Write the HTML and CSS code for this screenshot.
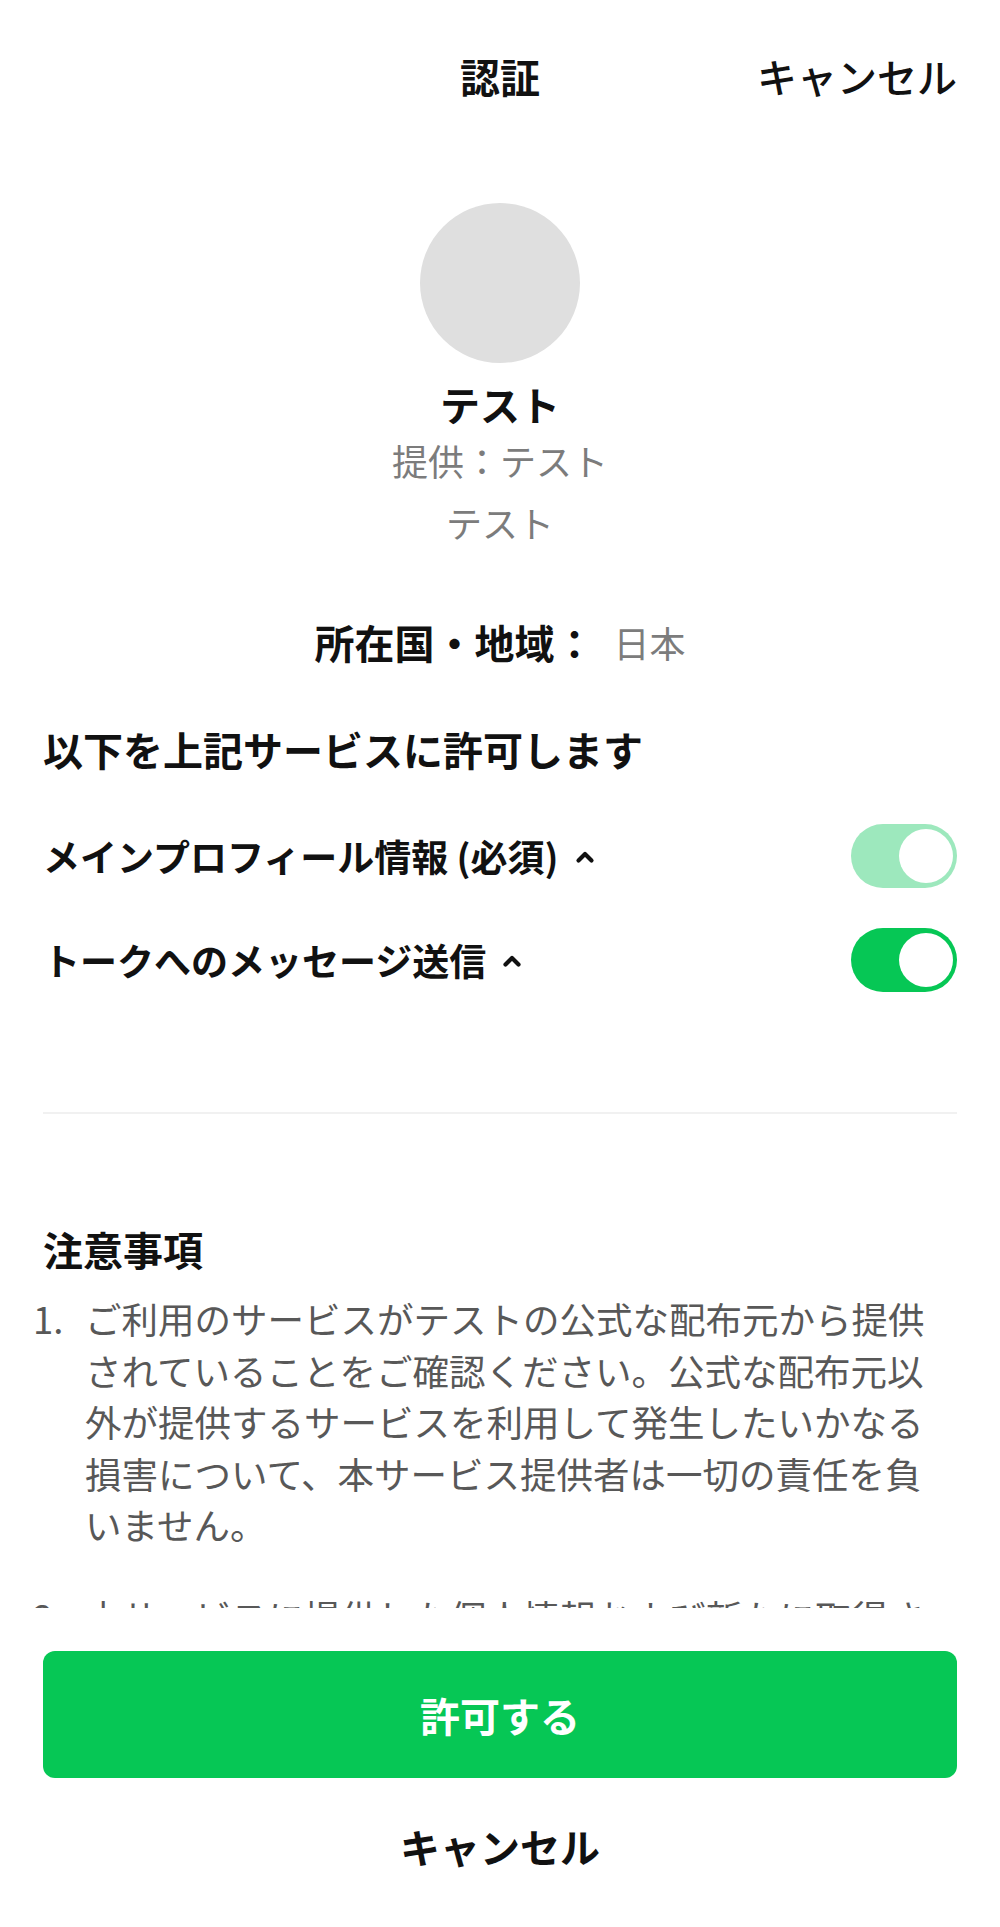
FILE: index.html
```html
<!DOCTYPE html>
<html lang="ja">
<head>
<meta charset="utf-8">
<title>認証</title>
<link rel="stylesheet" href="styles.css">
</head>
<body>
<div class="page">
  <header class="topbar">
    <span></span>
    <h1 class="title">認証</h1>
    <span class="top-cancel">キャンセル</span>
  </header>

  <main class="content">
    <div class="avatar"></div>
    <div class="app-name">テスト</div>
    <div class="meta">提供：テスト</div>
    <div class="meta">テスト</div>

    <div class="region">
      <span class="region-label">所在国・地域：</span>
      <span class="region-value">日本</span>
    </div>

    <h2 class="allow-title">以下を上記サービスに許可します</h2>

    <div class="perm perm-first">
      <div class="perm-label">
        <span>メインプロフィール情報 (必須)</span>
        <svg class="chev" viewBox="0 0 20 14" width="20" height="14"><polyline points="3.5,10.5 10,4 16.5,10.5" fill="none" stroke="#111" stroke-width="4.2" stroke-linejoin="round" stroke-linecap="round"/></svg>
      </div>
      <div class="toggle toggle-disabled"><span class="knob"></span></div>
    </div>

    <div class="perm perm-next">
      <div class="perm-label">
        <span>トークへのメッセージ送信</span>
        <svg class="chev" viewBox="0 0 20 14" width="20" height="14"><polyline points="3.5,10.5 10,4 16.5,10.5" fill="none" stroke="#111" stroke-width="4.2" stroke-linejoin="round" stroke-linecap="round"/></svg>
      </div>
      <div class="toggle"><span class="knob"></span></div>
    </div>

    <hr class="divider">

    <h3 class="notes-title">注意事項</h3>
    <ol class="notes">
      <li class="note"><span class="num">1.</span><span class="note-text">ご利用のサービスがテストの公式な配布元から提供されていることをご確認ください。公式な配布元以外が提供するサービスを利用して発生したいかなる損害について、本サービス提供者は一切の責任を負いません。</span></li>
      <li class="note note-next"><span class="num">2.</span><span class="note-text">本サービスに提供した個人情報および新たに取得される情報は、テストのプライバシーポリシーに従って取り扱われます。</span></li>
    </ol>
  </main>

  <footer class="actions">
    <button class="allow-btn">許可する</button>
    <button class="cancel-btn">キャンセル</button>
  </footer>
</div>
</body>
</html>
```
FILE: styles.css
```css
* { box-sizing: border-box; }
html, body { margin: 0; padding: 0; background: #fff; }
body {
  font-family: "Noto Sans CJK JP", "Noto Sans", sans-serif;
  color: #111;
}
.page {
  height: 1927px;
  display: flex;
  flex-direction: column;
}
.topbar {
  height: 152px;
  flex: none;
  display: grid;
  grid-template-columns: 1fr auto 1fr;
  align-items: center;
  padding: 0 43px;
}
.title {
  margin: 0;
  font-size: 40px;
  font-weight: 700;
  line-height: 50px;
}
.top-cancel {
  justify-self: end;
  font-size: 40px;
  font-weight: 500;
  line-height: 50px;
}
.content {
  flex: 1;
  min-height: 0;
  overflow: hidden;
  padding: 0 43px;
  display: flex;
  flex-direction: column;
}
.avatar {
  width: 160px;
  height: 160px;
  border-radius: 50%;
  background: #dfdfdf;
  margin: 51px auto 0;
  flex: none;
}
.app-name {
  margin-top: 16px;
  text-align: center;
  font-size: 40px;
  font-weight: 700;
  line-height: 50px;
}
.meta {
  text-align: center;
  font-size: 36px;
  line-height: 62px;
  color: #7c7c7c;
}
.region {
  margin-top: 64px;
  display: flex;
  justify-content: center;
  align-items: center;
  gap: 19px;
  line-height: 50px;
}
.region-label {
  font-size: 40px;
  font-weight: 700;
}
.region-value {
  font-size: 36px;
  color: #7c7c7c;
}
.allow-title {
  margin: 57px 0 0;
  font-size: 40px;
  font-weight: 700;
  line-height: 50px;
}
.perm {
  height: 64px;
  display: flex;
  align-items: center;
  justify-content: space-between;
  flex: none;
}
.perm-first { margin-top: 50px; }
.perm-next { margin-top: 40px; }
.perm-label {
  display: flex;
  align-items: center;
  font-size: 37px;
  font-weight: 700;
  line-height: 50px;
}
.chev {
  margin-left: 16px;
  margin-top: 2px;
}
.toggle {
  width: 106px;
  height: 64px;
  border-radius: 32px;
  background: #06c755;
  display: flex;
  justify-content: flex-end;
  align-items: center;
  padding: 0 4px;
}
.toggle-disabled { background: #9de8bd; }
.knob {
  width: 54px;
  height: 54px;
  border-radius: 50%;
  background: #fff;
}
.divider {
  margin: 120px 0 0;
  border: 0;
  height: 2px;
  background: #f1f1f1;
  flex: none;
}
.notes-title {
  margin: 110px 0 0;
  font-size: 40px;
  font-weight: 700;
  line-height: 50px;
}
.notes {
  list-style: none;
  margin: 19px 0 0;
  padding: 0;
}
.note {
  display: flex;
  font-size: 36.5px;
  line-height: 51.5px;
  color: #585858;
}
.note-next { margin-top: 40px; }
.num {
  flex: none;
  width: 52px;
  margin-left: -10px;
}
.note-text { flex: 1; }
.actions {
  flex: none;
  padding: 43px 43px 56px;
  display: flex;
  flex-direction: column;
  background: #fff;
}
.allow-btn {
  height: 127px;
  border: 0;
  border-radius: 12px;
  background: #06c755;
  color: #fff;
  font-family: inherit;
  font-size: 40px;
  font-weight: 700;
  line-height: 50px;
  padding: 0;
}
.cancel-btn {
  margin-top: 43px;
  border: 0;
  background: none;
  color: #111;
  font-family: inherit;
  font-size: 40px;
  font-weight: 700;
  line-height: 50px;
  padding: 0;
}
```
